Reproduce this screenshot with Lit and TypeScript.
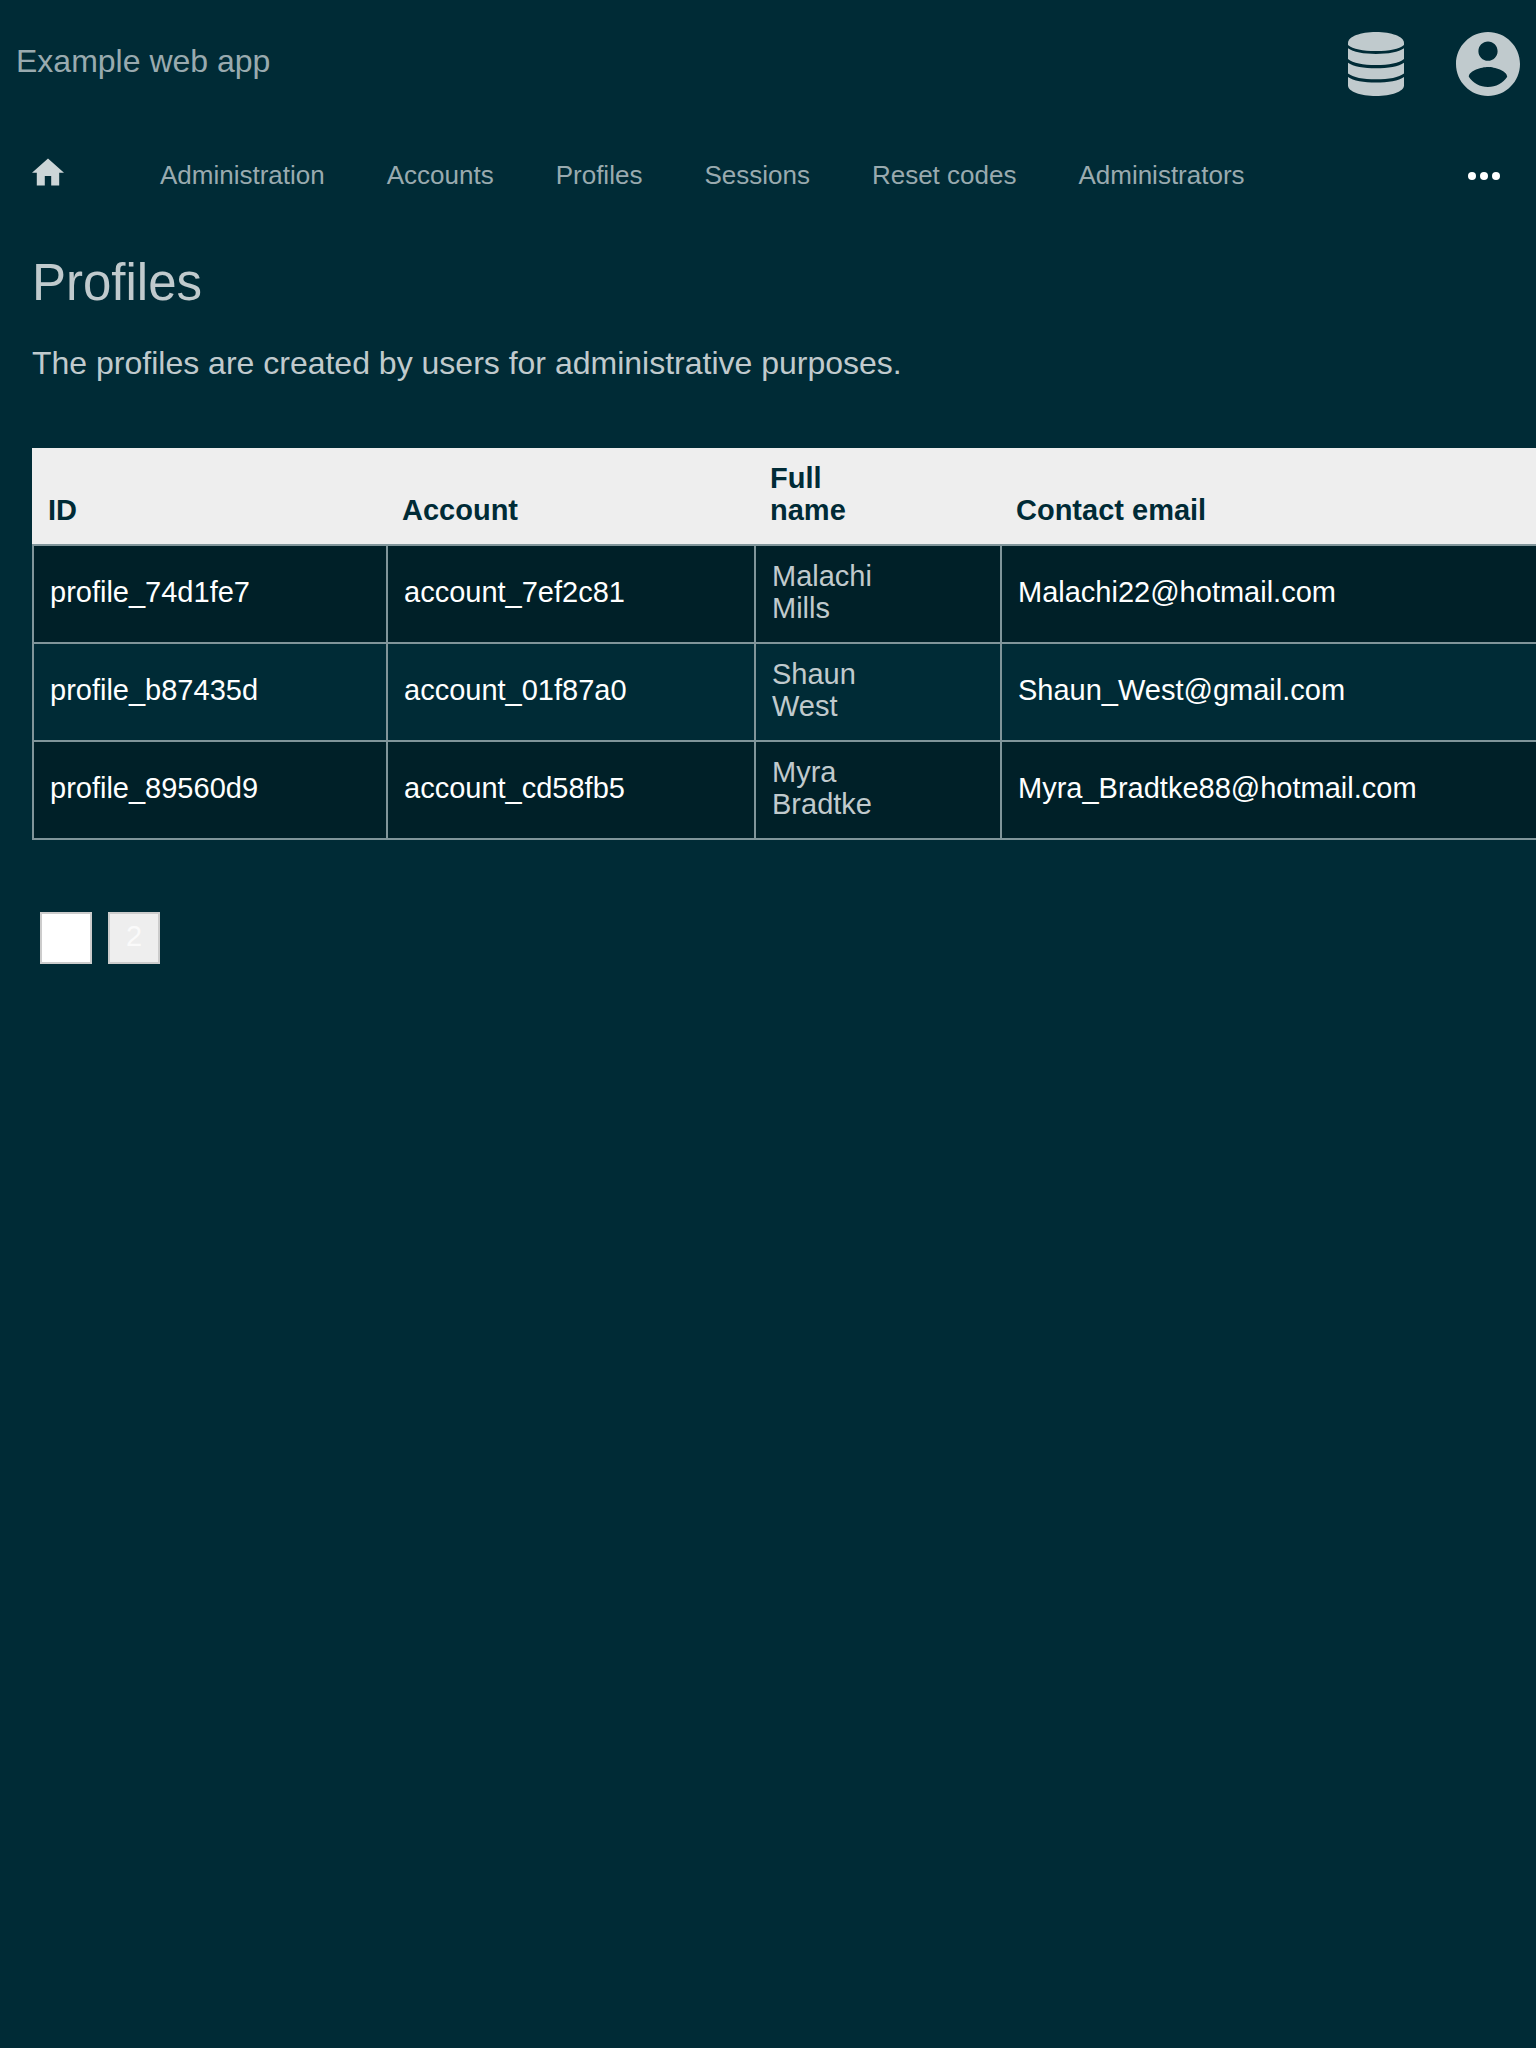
import { LitElement, html, css } from "lit";
import { customElement } from "lit/decorators.js";

interface Profile {
  id: string;
  account: string;
  fullName: string;
  email: string;
}

const NAV = ["Administration", "Accounts", "Profiles", "Sessions", "Reset codes", "Administrators"];

const PROFILES: Profile[] = [
  { id: "profile_74d1fe7", account: "account_7ef2c81", fullName: "Malachi Mills", email: "Malachi22@hotmail.com" },
  { id: "profile_b87435d", account: "account_01f87a0", fullName: "Shaun West", email: "Shaun_West@gmail.com" },
  { id: "profile_89560d9", account: "account_cd58fb5", fullName: "Myra Bradtke", email: "Myra_Bradtke88@hotmail.com" },
];

@customElement("app-root")
export class AppRoot extends LitElement {
  static styles = css`
    :host {
      display: block;
      min-height: 100vh;
      overflow-x: hidden;
      background: #002b36;
      color: #c0cacd;
      font-family: "Liberation Sans", Arial, sans-serif;
      font-size: 32px;
      line-height: 48px;
    }
    * { box-sizing: border-box; }
    a { color: inherit; text-decoration: none; }
    svg { display: block; fill: currentColor; }
    button { background: none; border: 0; padding: 0; color: inherit; font: inherit; cursor: pointer; }
    header {
      display: flex;
      align-items: center;
      justify-content: space-between;
      height: 128px;
      padding: 0 16px;
    }
    .brand { color: #99aaaf; padding-bottom: 6px; }
    .tools { display: flex; align-items: center; gap: 48px; }
    nav {
      display: flex;
      align-items: center;
      height: 96px;
      padding: 0 32px;
      color: #99aaaf;
      font-size: 26px;
    }
    .home { margin-right: 96px; padding-bottom: 8px; color: #ccd5d7; }
    .links { display: flex; flex: 1; gap: 62px; padding-bottom: 2px; }
    .more { color: #fff; }
    main { padding: 32px 0 0 32px; }
    h1 { margin: 0 0 29px; font-size: 51px; font-weight: 400; line-height: 54px; }
    p { margin: 0 0 61px; }
    table {
      width: 1680px;
      table-layout: fixed;
      border-collapse: separate;
      border-spacing: 0;
      font-size: 29px;
      line-height: 32px;
      text-align: left;
    }
    .id { width: 354px; }
    .account { width: 368px; }
    .full { width: 246px; }
    th { padding: 14px 16px 18px; background: #eee; color: #002b36; vertical-align: bottom; }
    td {
      padding: 14px 16px 18px;
      border: 0 solid #80959a;
      border-width: 0 0 2px 2px;
    }
    tbody tr:first-child td { border-top-width: 2px; }
    .name { padding-right: 96px; }
    td a { color: #fff; }
    tbody tr:nth-child(odd) { background: #002028; }
    .pages { display: flex; gap: 16px; margin: 72px 0 0; padding: 0 8px; list-style: none; }
    .pages a {
      display: block;
      width: 52px;
      height: 52px;
      border: 2px solid #ccc;
      background: #eee;
      color: #fafafa;
      font-size: 29px;
      line-height: 44px;
      text-align: center;
    }
    .pages .current { background: #fff; color: #fff; }
  `;

  render() {
    return html`
      <header>
        <a class="brand" href="#">Example web app</a>
        <div class="tools">
          <button aria-label="Database">
            <svg width="64" height="64" viewBox="0 0 64 64">
              <path d="M4 11C4 4.600 16.500 0 32 0s28 4.600 28 11v2C55 17 45.500 19 32 19S9 17 4 13z"/>
              <path d="M4 16.300C9 20 20 22 32 22s23-2 28-5.700V27C55 31 45 33 32 33S9 31 4 27z"/>
              <path d="M4 30.700c5 3.700 16 5.600 28 5.600s23-1.900 28-5.600v10.700C55 45.300 45 47.300 32 47.300S9 45.300 4 41.400z"/>
              <path d="M4 45c5 3.700 16 5.600 28 5.600S55 48.700 60 45v8.500C60 59.500 47.500 64 32 64S4 59.500 4 53.500z"/>
            </svg>
          </button>
          <button aria-label="Account">
            <svg width="64" height="64" viewBox="2 2 20 20"><path d="M12 2C6.480 2 2 6.480 2 12s4.480 10 10 10 10-4.480 10-10S17.520 2 12 2zm0 3c1.660 0 3 1.340 3 3s-1.340 3-3 3-3-1.340-3-3 1.340-3 3-3zm0 14.200c-2.500 0-4.710-1.280-6-3.220.030-1.990 4-3.080 6-3.080 1.990 0 5.970 1.090 6 3.080-1.290 1.940-3.500 3.220-6 3.220z"/></svg>
          </button>
        </div>
      </header>
      <nav>
        <a class="home" href="#" aria-label="Home">
          <svg width="32" height="28" viewBox="2 3 20 17"><path d="M10 20v-6h4v6h5v-8h3L12 3 2 12h3v8z"/></svg>
        </a>
        <div class="links">${NAV.map((n) => html`<a href="#">${n}</a>`)}</div>
        <button class="more" aria-label="More">
          <svg width="40" height="40" viewBox="0 0 40 40"><circle cx="8" cy="20" r="4"/><circle cx="20" cy="20" r="4"/><circle cx="32" cy="20" r="4"/></svg>
        </button>
      </nav>
      <main>
        <h1>Profiles</h1>
        <p>The profiles are created by users for administrative purposes.</p>
        <table>
          <thead>
            <tr>
              <th class="id">ID</th>
              <th class="account">Account</th>
              <th class="full name">Full name</th>
              <th>Contact email</th>
            </tr>
          </thead>
          <tbody>
            ${PROFILES.map((p) => html`<tr>
              <td><a href="#">${p.id}</a></td>
              <td><a href="#">${p.account}</a></td>
              <td class="name">${p.fullName}</td>
              <td><a href="#">${p.email}</a></td>
            </tr>`)}
          </tbody>
        </table>
        <ul class="pages">
          <li><a class="current" href="#">1</a></li>
          <li><a href="#">2</a></li>
        </ul>
      </main>
    `;
  }
}
